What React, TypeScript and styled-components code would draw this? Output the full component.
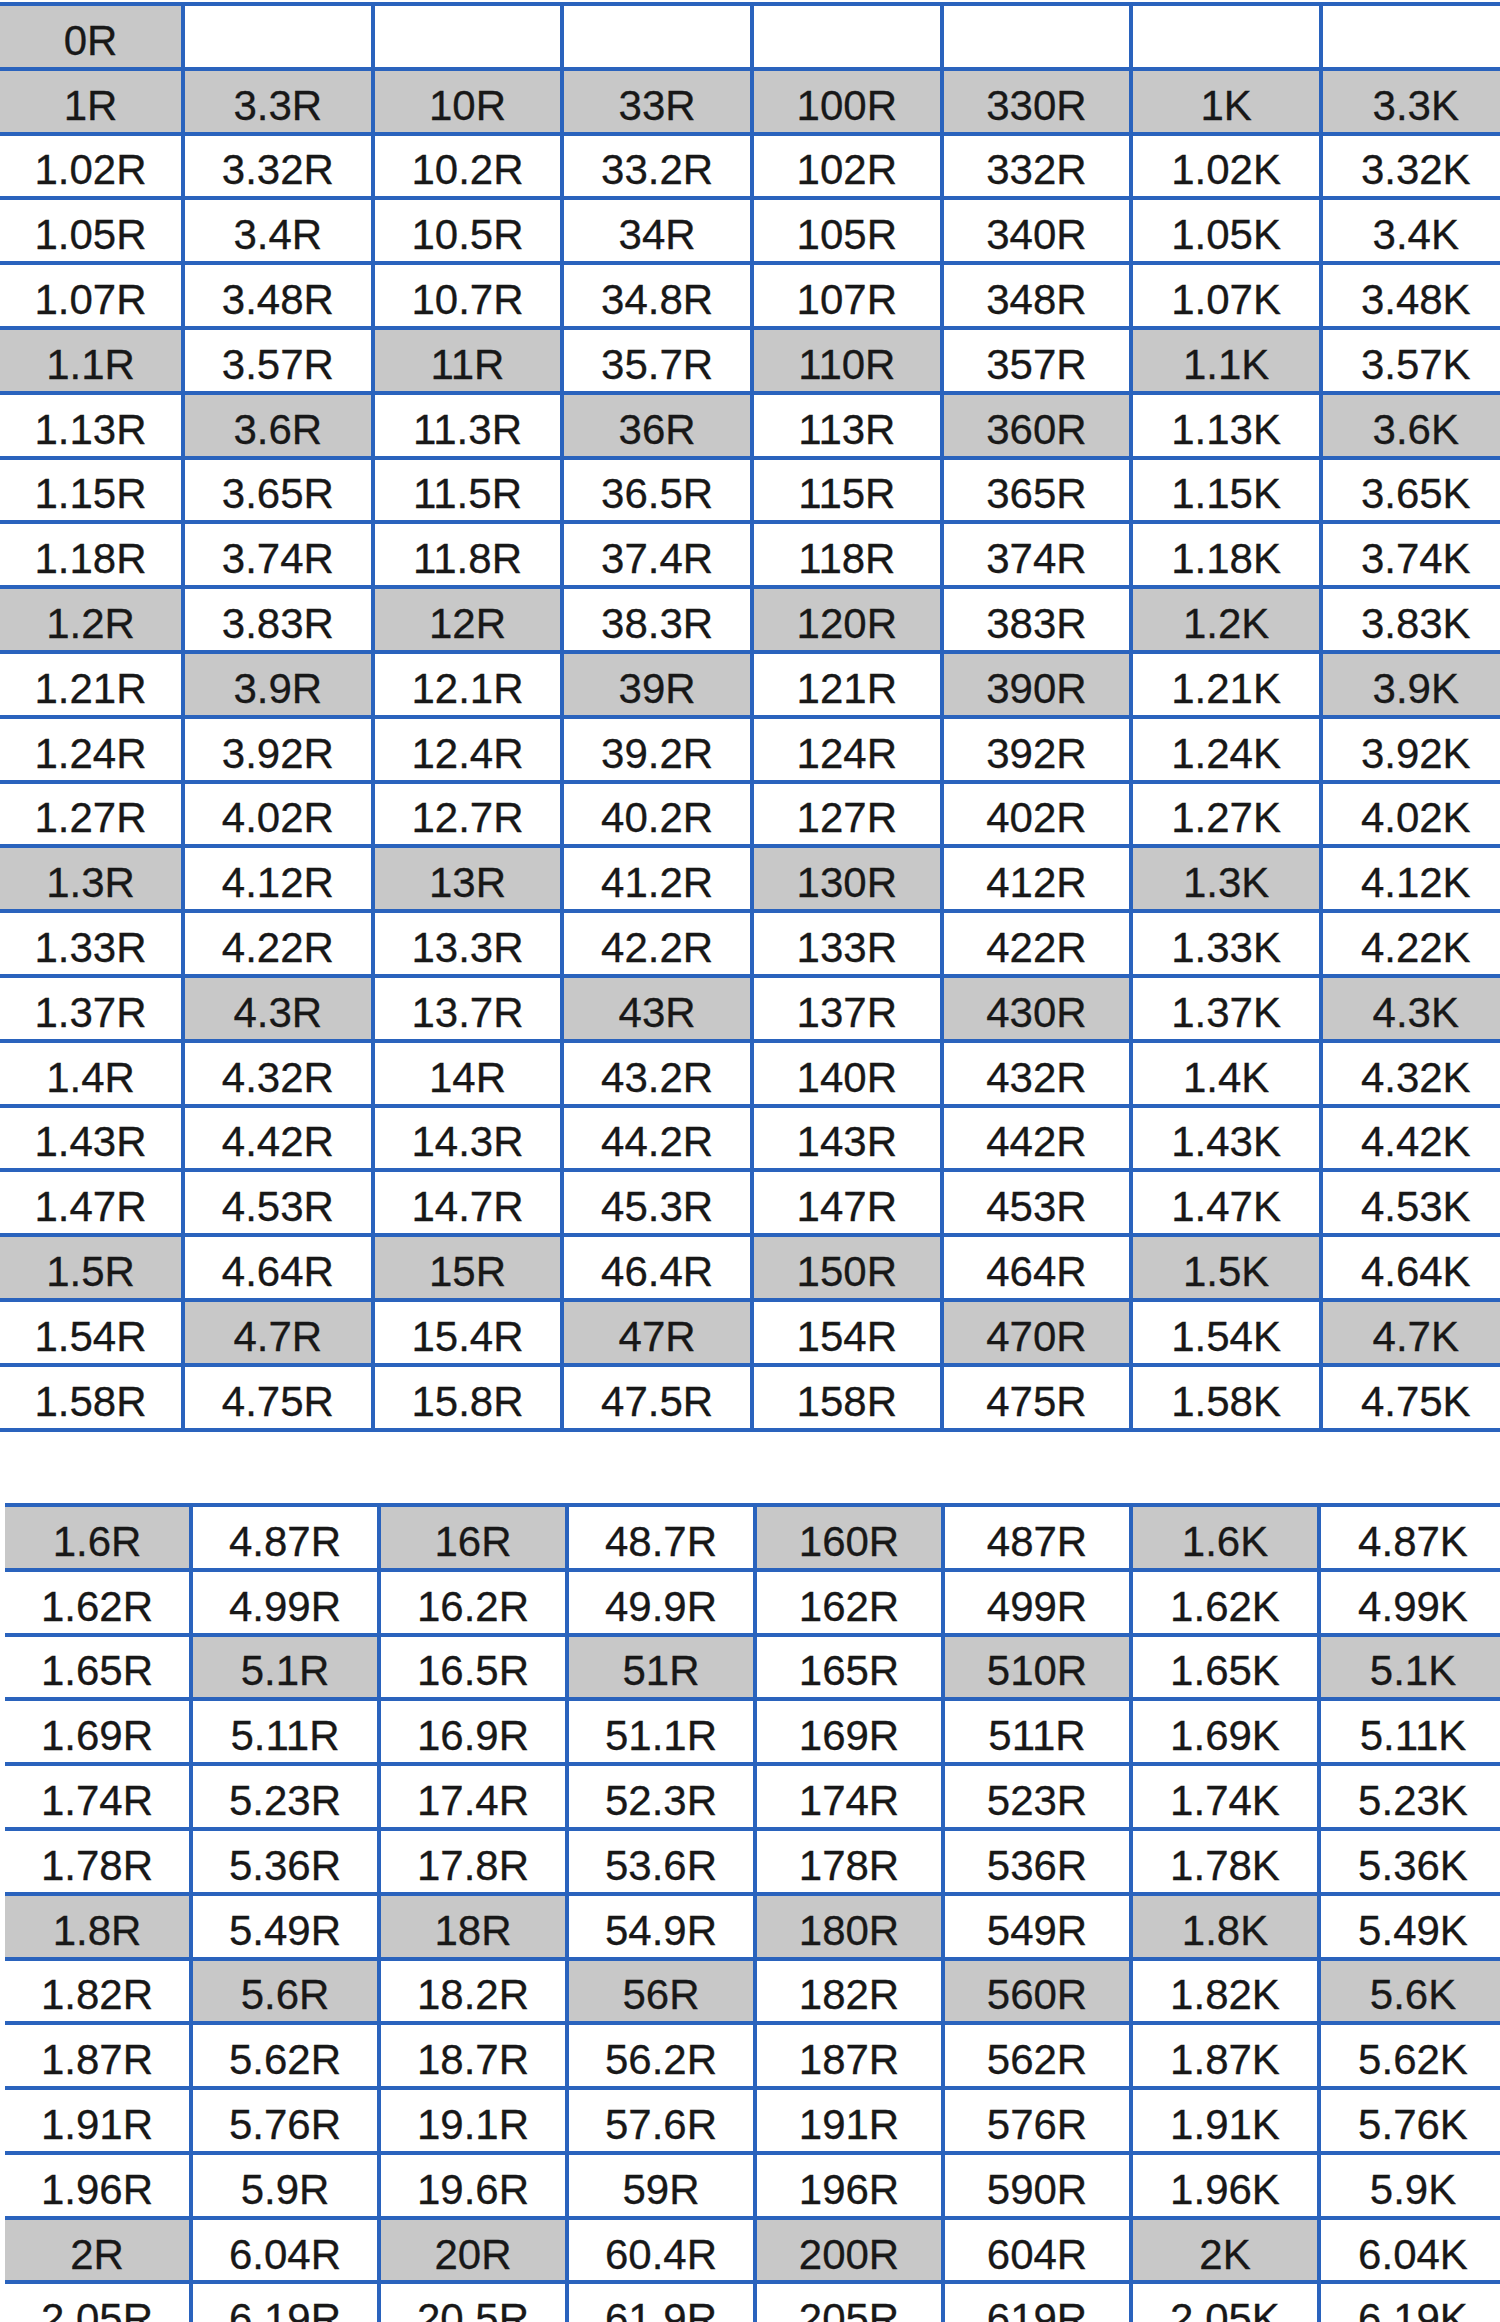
import React from "react";
import styled, { createGlobalStyle } from "styled-components";

const GlobalStyle = createGlobalStyle`
  html, body {
    margin: 0;
    padding: 0;
    background: #ffffff;
    overflow: hidden;
  }
  body {
    font-family: "Liberation Sans", Arial, sans-serif;
  }
`;

const Page = styled.div`
  width: 1500px;
  height: 2322px;
  overflow: hidden;
  display: flex;
  flex-direction: column;
  background: #ffffff;
`;

const Grid = styled.div<{ $cols: string; $left: number; $top: number }>`
  display: grid;
  grid-template-columns: ${(p) => p.$cols};
  grid-auto-rows: 60.8px;
  gap: 4px;
  padding: 4px 4px 4px 0;
  margin-left: ${(p) => p.$left}px;
  margin-top: ${(p) => p.$top}px;
  background: #2a63bd;
  width: max-content;
  flex-shrink: 0;
`;

const Cell = styled.div<{ $grey: boolean }>`
  display: flex;
  align-items: center;
  justify-content: center;
  padding-top: 9px;
  box-sizing: border-box;
  background: ${(p) => (p.$grey ? "#c8c8c8" : "#ffffff")};
  color: #181818;
  -webkit-text-stroke: 0.3px #181818;
  font-family: "Liberation Sans", Arial, sans-serif;
  font-size: 42px;
  line-height: 1;
  white-space: nowrap;
`;

const topRows: string[] = [
  "*0R|_|_|_|_|_|_|_",
  "*1R|*3.3R|*10R|*33R|*100R|*330R|*1K|*3.3K",
  "1.02R|3.32R|10.2R|33.2R|102R|332R|1.02K|3.32K",
  "1.05R|3.4R|10.5R|34R|105R|340R|1.05K|3.4K",
  "1.07R|3.48R|10.7R|34.8R|107R|348R|1.07K|3.48K",
  "*1.1R|3.57R|*11R|35.7R|*110R|357R|*1.1K|3.57K",
  "1.13R|*3.6R|11.3R|*36R|113R|*360R|1.13K|*3.6K",
  "1.15R|3.65R|11.5R|36.5R|115R|365R|1.15K|3.65K",
  "1.18R|3.74R|11.8R|37.4R|118R|374R|1.18K|3.74K",
  "*1.2R|3.83R|*12R|38.3R|*120R|383R|*1.2K|3.83K",
  "1.21R|*3.9R|12.1R|*39R|121R|*390R|1.21K|*3.9K",
  "1.24R|3.92R|12.4R|39.2R|124R|392R|1.24K|3.92K",
  "1.27R|4.02R|12.7R|40.2R|127R|402R|1.27K|4.02K",
  "*1.3R|4.12R|*13R|41.2R|*130R|412R|*1.3K|4.12K",
  "1.33R|4.22R|13.3R|42.2R|133R|422R|1.33K|4.22K",
  "1.37R|*4.3R|13.7R|*43R|137R|*430R|1.37K|*4.3K",
  "1.4R|4.32R|14R|43.2R|140R|432R|1.4K|4.32K",
  "1.43R|4.42R|14.3R|44.2R|143R|442R|1.43K|4.42K",
  "1.47R|4.53R|14.7R|45.3R|147R|453R|1.47K|4.53K",
  "*1.5R|4.64R|*15R|46.4R|*150R|464R|*1.5K|4.64K",
  "1.54R|*4.7R|15.4R|*47R|154R|*470R|1.54K|*4.7K",
  "1.58R|4.75R|15.8R|47.5R|158R|475R|1.58K|4.75K",
];

const bottomRows: string[] = [
  "*1.6R|4.87R|*16R|48.7R|*160R|487R|*1.6K|4.87K",
  "1.62R|4.99R|16.2R|49.9R|162R|499R|1.62K|4.99K",
  "1.65R|*5.1R|16.5R|*51R|165R|*510R|1.65K|*5.1K",
  "1.69R|5.11R|16.9R|51.1R|169R|511R|1.69K|5.11K",
  "1.74R|5.23R|17.4R|52.3R|174R|523R|1.74K|5.23K",
  "1.78R|5.36R|17.8R|53.6R|178R|536R|1.78K|5.36K",
  "*1.8R|5.49R|*18R|54.9R|*180R|549R|*1.8K|5.49K",
  "1.82R|*5.6R|18.2R|*56R|182R|*560R|1.82K|*5.6K",
  "1.87R|5.62R|18.7R|56.2R|187R|562R|1.87K|5.62K",
  "1.91R|5.76R|19.1R|57.6R|191R|576R|1.91K|5.76K",
  "1.96R|5.9R|19.6R|59R|196R|590R|1.96K|5.9K",
  "*2R|6.04R|*20R|60.4R|*200R|604R|*2K|6.04K",
  "2.05R|6.19R|20.5R|61.9R|205R|619R|2.05K|6.19K",
];

type TableProps = { rows: string[]; cols: string; left: number; top: number };

const ValueTable: React.FC<TableProps> = ({ rows, cols, left, top }) => (
  <Grid $cols={cols} $left={left} $top={top}>
    {rows.flatMap((row, r) =>
      row.split("|").map((raw, c) => {
        const grey = raw.startsWith("*");
        const text = raw.replace("*", "").replace("_", "");
        return (
          <Cell key={`${r}-${c}`} $grey={grey}>
            {text}
          </Cell>
        );
      })
    )}
  </Grid>
);

export default function App() {
  return (
    <Page>
      <GlobalStyle />
      <ValueTable rows={topRows} cols="181px repeat(7, 185.67px)" left={0} top={2} />
      <ValueTable rows={bottomRows} cols="repeat(8, 184px)" left={5} top={71.4} />
    </Page>
  );
}
